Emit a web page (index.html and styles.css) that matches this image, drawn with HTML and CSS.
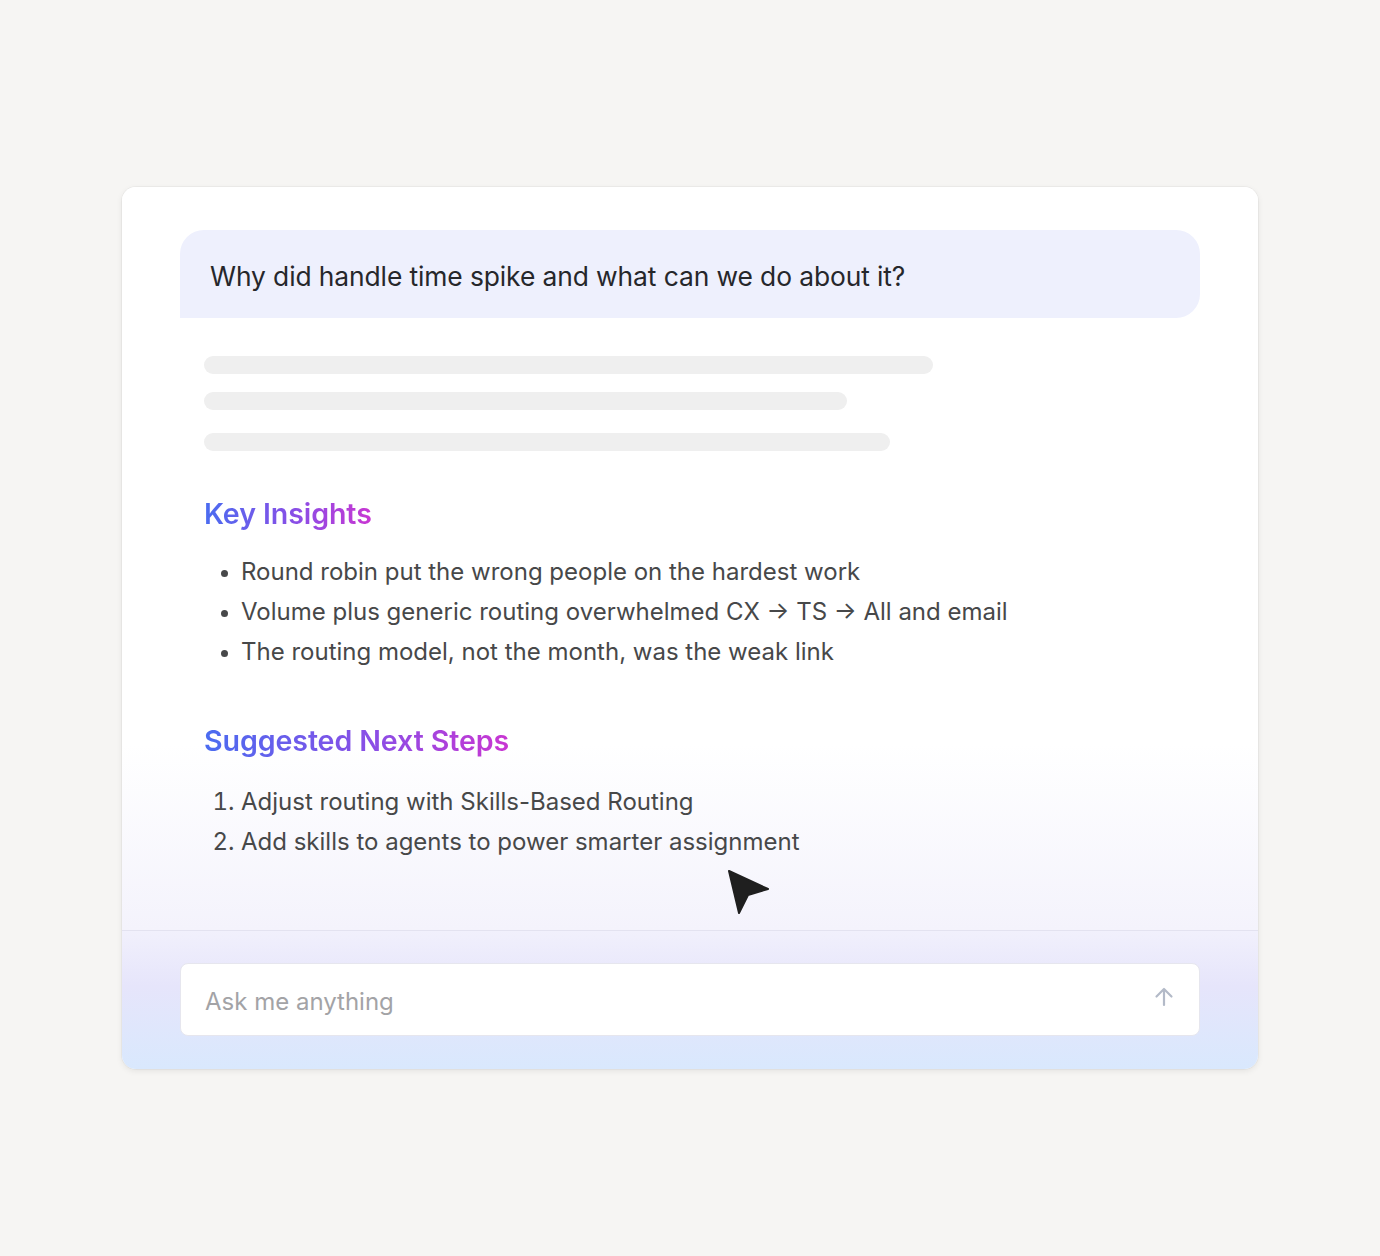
FILE: index.html
```html
<!DOCTYPE html>
<html>
<head>
<meta charset="utf-8">
<link rel="stylesheet" href="styles.css">
</head>
<body>
<div class="card">
  <div class="main">
    <div class="bubble">Why did handle time spike and what can we do about it?</div>
    <div class="answer">
      <div class="skeleton">
        <div class="bar b1"></div>
        <div class="bar b2"></div>
        <div class="bar b3"></div>
      </div>
      <h2 class="heading">Key Insights</h2>
      <ul class="list">
        <li>Round robin put the wrong people on the hardest work</li>
        <li>Volume plus generic routing overwhelmed CX → TS → All and email</li>
        <li>The routing model, not the month, was the weak link</li>
      </ul>
      <h2 class="heading h2b">Suggested Next Steps</h2>
      <ol class="list olist">
        <li>Adjust routing with Skills-Based Routing</li>
        <li>Add skills to agents to power smarter assignment</li>
      </ol>
    </div>
    <svg class="cursor" width="44" height="46" viewBox="0 0 44 46">
      <path d="M3 2 L42 20 L22 26 L13 44 Z" fill="#1f1f1f" stroke="#1f1f1f" stroke-width="2" stroke-linejoin="round"/>
    </svg>
  </div>
  <div class="footer">
    <div class="input">
      <span class="placeholder">Ask me anything</span>
      <svg class="send" width="22" height="22" viewBox="0 0 22 22">
        <path d="M11 19 V3 M3.5 10.5 L11 3 L18.5 10.5" fill="none" stroke="#b3bac8" stroke-width="2.2" stroke-linecap="round" stroke-linejoin="round"/>
      </svg>
    </div>
  </div>
</div>
</body>
</html>
```

FILE: styles.css
```css
* { box-sizing: border-box; }
html, body { margin: 0; padding: 0; }
body {
  background: #f6f5f3;
  font-family: Inter, "Noto Sans", sans-serif;
  width: 1380px;
  height: 1256px;
  padding-top: 187px;
  padding-left: 122px;
}
.card {
  width: 1136px;
  height: 882px;
  border-radius: 14px;
  background: #fff;
  box-shadow: 0 2px 6px rgba(0,0,0,0.08), 0 0 0 1px rgba(0,0,0,0.03);
  overflow: hidden;
  display: flex;
  flex-direction: column;
}
.main {
  position: relative;
  height: 744px;
  padding: 43px 58px 0 58px;
  background: linear-gradient(to bottom, #ffffff 0%, #ffffff 75%, #f4f3fc 100%);
  border-bottom: 1px solid #e3e2f0;
}
.bubble {
  height: 88px;
  background: #eef0fd;
  border-radius: 24px 24px 24px 0;
  padding-left: 30px;
  padding-top: 3px;
  display: flex;
  align-items: center;
  font-size: 26.4px;
  color: #26272b;
  letter-spacing: -0.1px;
}
.answer {
  padding-left: 24px;
  padding-top: 38px;
}
.skeleton { display: flex; flex-direction: column; }
.bar {
  height: 18px;
  border-radius: 9px;
  background: #efefef;
}
.b1 { width: 729px; }
.b2 { width: 643px; margin-top: 18px; }
.b3 { width: 686px; margin-top: 23px; }
.heading {
  margin: 45px 0 0 0;
  font-size: 28.6px;
  font-weight: 600;
  line-height: 36px;
  display: block;
  width: max-content;
  background: linear-gradient(to right, #4a6cf0 0%, #8a4ee6 55%, #c936d2 100%);
  -webkit-background-clip: text;
  background-clip: text;
  color: transparent;
  letter-spacing: -0.1px;
}
.list {
  margin: 20px 0 0 0;
  padding-left: 37px;
  font-size: 24px;
  line-height: 40px;
  color: #474849;
}
.list li { padding-left: 0; }
.list li::marker { font-size: 21px; }
.h2b { margin-top: 51px; }
.olist { margin-top: 23px; }
.olist li::marker { font-size: 24px; }
.cursor {
  position: absolute;
  left: 604px;
  top: 682px;
}
.footer {
  flex: 1;
  padding: 32px 58px 0 58px;
  background: linear-gradient(to bottom, #f1f0fc 0%, #e6e5fb 40%, #d9e8fd 100%);
}
.input {
  height: 73px;
  background: #fff;
  border: 1px solid #e6e6ee;
  border-radius: 8px;
  display: flex;
  align-items: center;
  justify-content: space-between;
  padding: 4px 24px 0 24px;
}
.placeholder {
  font-size: 24px;
  color: #a3a3a6;
}
.send { margin-top: -10px; }
```
